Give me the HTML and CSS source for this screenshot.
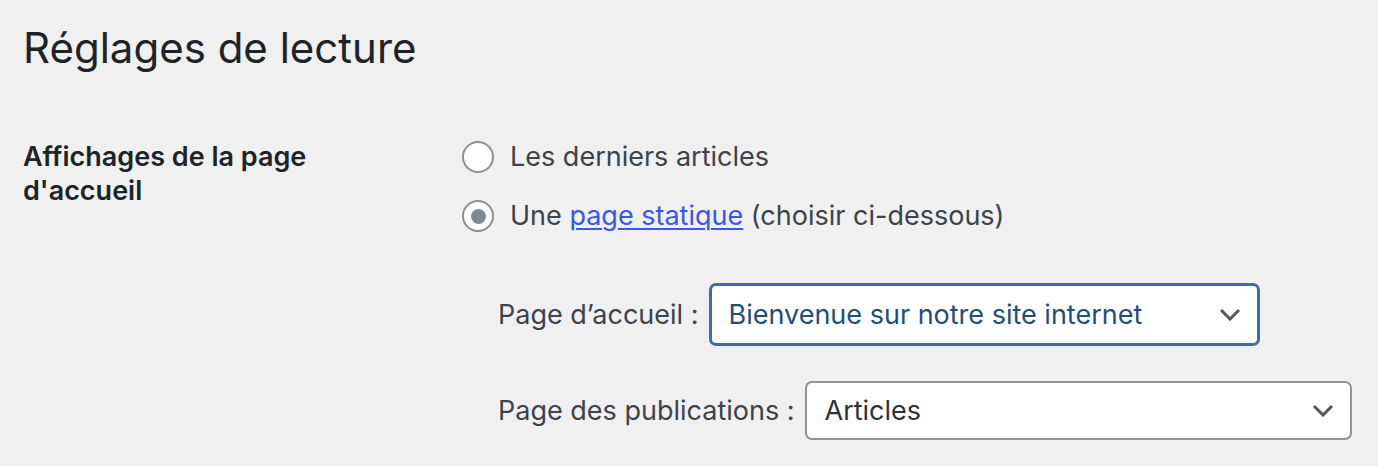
FILE: index.html
```html
<!DOCTYPE html>
<html lang="fr">
<head>
<meta charset="utf-8">
<title>Réglages de lecture</title>
<link rel="stylesheet" href="styles.css">
</head>
<body>
<div class="wrap">
  <h1 class="title">Réglages de lecture</h1>
  <div class="form-row">
    <div class="row-label">Affichages de la page d'accueil</div>
    <div class="row-field">
      <label class="radio-line">
        <span class="radio"></span>
        <span>Les derniers articles</span>
      </label>
      <label class="radio-line">
        <span class="radio checked"><span class="dot"></span></span>
        <span>Une <a class="link" href="#">page statique</a> (choisir ci-dessous)</span>
      </label>
      <div class="sub-list">
        <div class="sub-row">
          <span class="sub-label">Page d’accueil :</span>
          <div class="select focused">
            <span class="select-text">Bienvenue sur notre site internet</span>
            <svg class="chev" width="22" height="13" viewBox="0 0 22 13"><polyline points="2,2 11,11 20,2" fill="none" stroke="#50575e" stroke-width="3"/></svg>
          </div>
        </div>
        <div class="sub-row">
          <span class="sub-label">Page des publications :</span>
          <div class="select plain">
            <span class="select-text">Articles</span>
            <svg class="chev" width="22" height="13" viewBox="0 0 22 13"><polyline points="2,2 11,11 20,2" fill="none" stroke="#50575e" stroke-width="3"/></svg>
          </div>
        </div>
      </div>
    </div>
  </div>
</div>
</body>
</html>
```

FILE: styles.css
```css
html, body {
  margin: 0;
  padding: 0;
  background: #f0f0f1;
}
body {
  font-family: Inter, "Noto Sans", sans-serif;
  color: #3c434a;
  font-size: 27px;
}
.wrap {
  padding: 22px 23px 0 23px;
}
.title {
  margin: 0;
  font-size: 42px;
  font-weight: 400;
  line-height: 52px;
  color: #1d2327;
}
.form-row {
  display: grid;
  grid-template-columns: 439px 1fr;
  margin-top: 66px;
}
.row-label {
  font-weight: 600;
  color: #1d2327;
  line-height: 34px;
  width: 340px;
}
.row-field {
  display: flex;
  flex-direction: column;
  gap: 25px;
}
.radio-line {
  display: flex;
  align-items: center;
  gap: 16px;
  height: 34px;
  line-height: 34px;
  color: #3c434a;
}
.radio {
  width: 28px;
  height: 28px;
  border: 2px solid #8c8f94;
  border-radius: 50%;
  background: #fff;
  display: flex;
  align-items: center;
  justify-content: center;
  flex: none;
}
.dot {
  width: 15px;
  height: 15px;
  border-radius: 50%;
  background: #7e8993;
}
.link {
  color: #3858e9;
  text-decoration: underline;
  text-underline-offset: 3px;
  text-decoration-thickness: 2px;
}
.sub-list {
  display: flex;
  flex-direction: column;
  gap: 35px;
  padding-left: 36px;
  margin-top: 25px;
}
.sub-row {
  display: flex;
  align-items: center;
  gap: 10px;
}
.sub-label {
  color: #3c434a;
}
.select {
  display: flex;
  align-items: center;
  justify-content: space-between;
  background: #fff;
  box-sizing: border-box;
  padding: 0 16px 0 17px;
}
.select.focused {
  width: 551px;
  height: 63px;
  border: 3px solid #3a6eab;
  border-radius: 7px;
  color: #1f4e7a;
}
.select.plain {
  width: 547px;
  height: 59px;
  border: 2px solid #8f9297;
  border-radius: 7px;
  color: #2c3338;
  padding-left: 18px;
}
.chev {
  flex: none;
}
```
